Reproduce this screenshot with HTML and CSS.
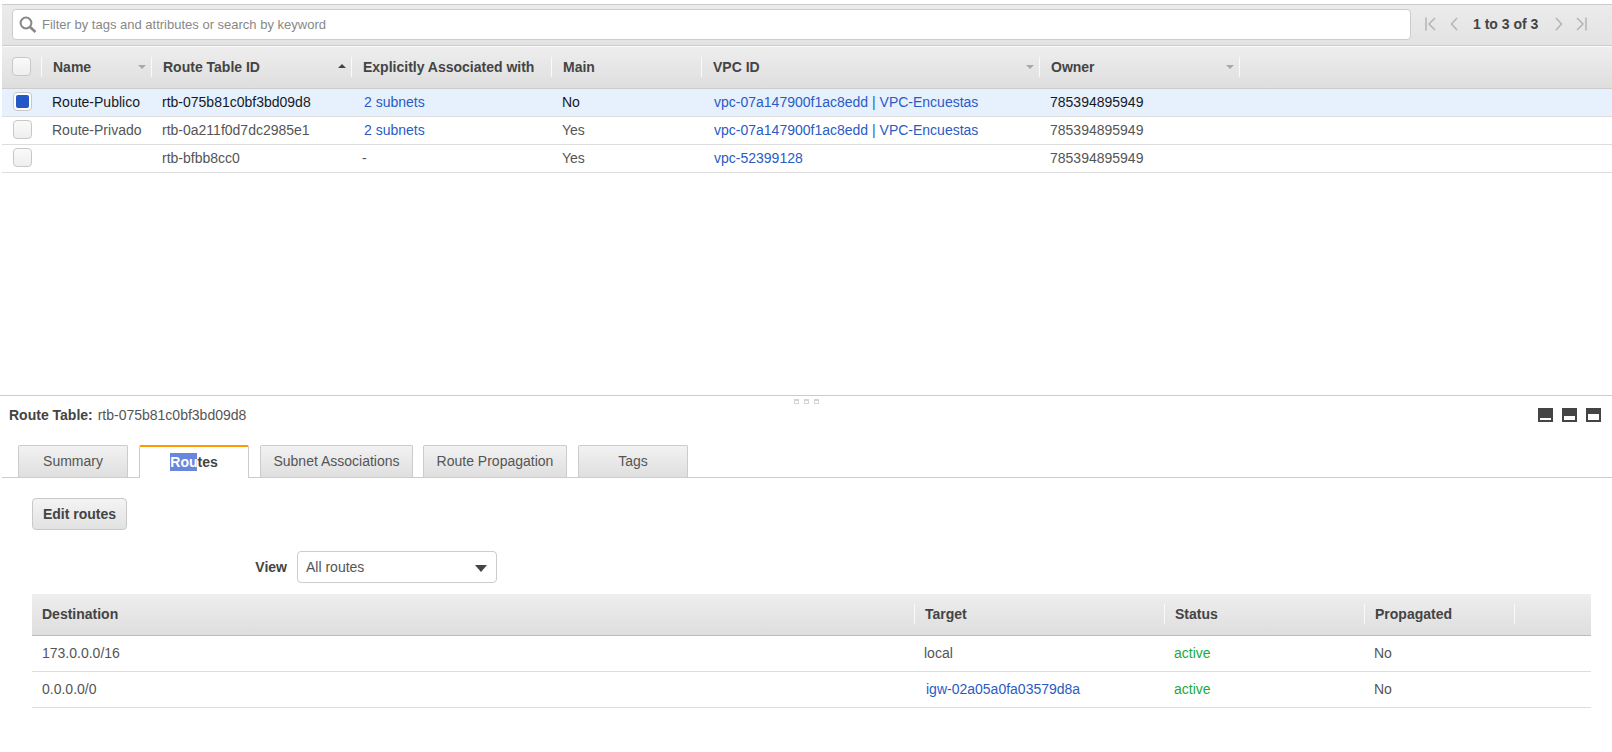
FILE: index.html
```html
<!DOCTYPE html>
<html lang="en">
<head>
  <meta charset="UTF-8">
  <title>Route Tables</title>
  <link rel="stylesheet" href="styles.css">
</head>
<body>
  <div class="top-pane">
    <div class="filter-bar">
      <div class="filter-input">
        <svg class="search-icon" width="18" height="17" viewBox="0 0 18 17">
          <circle cx="7" cy="7" r="5.4" fill="none" stroke="#888" stroke-width="2"/>
          <path d="M11 11l5.5 5" stroke="#888" stroke-width="2.6" fill="none"/>
        </svg>
        <span>Filter by tags and attributes or search by keyword</span>
      </div>
      <div class="pager">
        <svg width="11" height="14" viewBox="0 0 11 14"><path d="M1 0.5v13M10 1L4 7l6 6" fill="none" stroke="#b4b4b4" stroke-width="1.5"/></svg>
        <svg class="pager-prev" width="8" height="14" viewBox="0 0 8 14"><path d="M7 1L1.500 7L7 13" fill="none" stroke="#b4b4b4" stroke-width="1.500"/></svg>
        <span class="pager-text">1 to 3 of 3</span>
        <svg class="pager-next" width="8" height="14" viewBox="0 0 8 14"><path d="M1 1l5.500 6L1 13" fill="none" stroke="#b4b4b4" stroke-width="1.500"/></svg>
        <svg class="pager-last" width="11" height="14" viewBox="0 0 11 14"><path d="M10 0.5v13M1 1l6 6l-6 6" fill="none" stroke="#b4b4b4" stroke-width="1.500"/></svg>
      </div>
    </div>

    <div class="list-head">
      <div class="head-check"><span class="check"></span></div>
      <div class="head-cell">Name<i class="arrow"></i></div>
      <div class="head-cell">Route Table ID<i class="arrow arrow-up"></i></div>
      <div class="head-cell">Explicitly Associated with</div>
      <div class="head-cell">Main</div>
      <div class="head-cell">VPC ID<i class="arrow"></i></div>
      <div class="head-cell">Owner<i class="arrow"></i></div>
      <div class="head-cell"></div>
    </div>

    <div class="list-row selected">
      <div class="row-check"><span class="check checked"></span></div>
      <div>Route-Publico</div>
      <div>rtb-075b81c0bf3bd09d8</div>
      <div><a class="link" href="#">2 subnets</a></div>
      <div>No</div>
      <div><a class="link" href="#">vpc-07a147900f1ac8edd | VPC-Encuestas</a></div>
      <div>785394895949</div>
    </div>
    <div class="list-row">
      <div class="row-check"><span class="check"></span></div>
      <div>Route-Privado</div>
      <div>rtb-0a211f0d7dc2985e1</div>
      <div><a class="link" href="#">2 subnets</a></div>
      <div>Yes</div>
      <div><a class="link" href="#">vpc-07a147900f1ac8edd | VPC-Encuestas</a></div>
      <div>785394895949</div>
    </div>
    <div class="list-row">
      <div class="row-check"><span class="check"></span></div>
      <div></div>
      <div>rtb-bfbb8cc0</div>
      <div>-</div>
      <div>Yes</div>
      <div><a class="link" href="#">vpc-52399128</a></div>
      <div>785394895949</div>
    </div>
  </div>

  <div class="details">
    <div class="grip"><i></i><i></i><i></i></div>
    <div class="details-title">
      <div><b>Route Table:</b> <span class="title-id">rtb-075b81c0bf3bd09d8</span></div>
      <div class="pane-icons">
        <span class="pane-icon small"></span>
        <span class="pane-icon medium"></span>
        <span class="pane-icon large"></span>
      </div>
    </div>

    <div class="tabs">
      <div class="tab tab-summary">Summary</div>
      <div class="tab tab-routes active"><span class="picked">Rou</span>tes</div>
      <div class="tab tab-subnets">Subnet Associations</div>
      <div class="tab tab-propagation">Route Propagation</div>
      <div class="tab tab-tags">Tags</div>
    </div>

    <div class="tab-body">
      <button class="edit-btn">Edit routes</button>

      <div class="view-row">
        <label class="view-label">View</label>
        <div class="view-select">All routes<i class="select-arrow"></i></div>
      </div>

      <div class="routes-head">
        <div class="routes-hcell">Destination</div>
        <div class="routes-hcell sep">Target</div>
        <div class="routes-hcell sep">Status</div>
        <div class="routes-hcell sep">Propagated</div>
        <div class="routes-hcell sep"></div>
      </div>
      <div class="routes-row">
        <div>173.0.0.0/16</div>
        <div>local</div>
        <div class="active-text">active</div>
        <div>No</div>
      </div>
      <div class="routes-row">
        <div>0.0.0.0/0</div>
        <div><a class="link" href="#">igw-02a05a0fa03579d8a</a></div>
        <div class="active-text">active</div>
        <div>No</div>
      </div>
    </div>
  </div>
</body>
</html>
```

FILE: styles.css
```css
body {
  margin: 0;
  padding: 4px 0 0 2px;
  font-family: 'Liberation Sans', Arial, sans-serif;
  font-size: 14px;
  color: #555;
  background: #fff;
}

b {
  color: #444;
}

.top-pane {
  height: 391px;
}

.filter-bar {
  height: 38px;
  padding: 0 0 2px 10px;
  display: flex;
  align-items: center;
  background: linear-gradient(#ebebeb, #e3e3e3);
  border-top: 1px solid #ccc;
  border-bottom: 1px solid #ccc;
}

.filter-input {
  width: 1397px;
  height: 29px;
  display: flex;
  align-items: center;
  background: #fff;
  border: 1px solid #ccc;
  border-radius: 4px;
  font-size: 13px;
  color: #888;
}

.search-icon {
  margin: 0 5px 0 6px;
}

.pager {
  display: flex;
  align-items: center;
  margin-left: 14px;
}

.pager-prev {
  margin-left: 14px;
}

.pager-text {
  margin-left: 15px;
  font-weight: bold;
  color: #444;
}

.pager-next {
  margin-left: 17px;
}

.pager-last {
  margin-left: 13px;
}

.list-head {
  height: 43px;
  box-sizing: border-box;
  padding-bottom: 2px;
  display: grid;
  grid-template-columns: 40px 110px 200px 200px 150px 338px 200px 1fr;
  align-items: center;
  background: linear-gradient(#eeeeee, #dedede);
  border-top: 1px solid #fafafa;
  border-bottom: 1px solid #ccc;
  font-weight: bold;
  color: #444;
}

.head-check {
  padding-left: 10px;
  display: flex;
}

.head-cell {
  position: relative;
  height: 20px;
  line-height: 20px;
  margin-left: -1px;
  padding-left: 11px;
  border-left: 1px solid #fafafa;
}

.arrow {
  position: absolute;
  right: 6px;
  top: 8px;
  border-left: 4px solid transparent;
  border-right: 4px solid transparent;
  border-top: 4px solid #a8a8a8;
}

.arrow-up {
  top: 7px;
  border-top: 0;
  border-bottom: 4px solid #444;
}

.check {
  display: block;
  width: 19px;
  height: 19px;
  box-sizing: border-box;
  background: linear-gradient(#fafafa, #eeeeee);
  border: 1px solid #c8c8c8;
  border-radius: 4px;
}

.check.checked {
  background: #fff;
  padding: 2px;
}

.check.checked::before {
  content: "";
  display: block;
  width: 13px;
  height: 13px;
  background: #2458c6;
  border-radius: 2px;
}

.list-row {
  height: 28px;
  box-sizing: border-box;
  padding-bottom: 2px;
  display: grid;
  grid-template-columns: 40px 110px 200px 200px 150px 338px 200px 1fr;
  align-items: center;
  border-bottom: 1px solid #ddd;
}

.list-row > div {
  padding-left: 10px;
  white-space: nowrap;
}

.list-row > .row-check {
  padding-left: 11px;
}

.list-row.selected {
  background: #e6f1fd;
  color: #16191f;
}

.link {
  color: #2a5bc4;
  text-decoration: none;
  margin-left: 2px;
}

.details {
  position: relative;
  border-top: 1px solid #ccc;
  margin-left: -2px;
  padding-left: 2px;
}

.grip {
  position: absolute;
  left: 794px;
  top: 3px;
  display: flex;
  gap: 5px;
}

.grip i {
  width: 3px;
  height: 2px;
  border: 1px solid #d4d4d4;
  border-top-width: 2px;
}

.details-title {
  height: 38px;
  display: flex;
  align-items: center;
  justify-content: space-between;
  padding: 0 11px 0 7px;
}

.title-id {
  margin-left: 1px;
}

.pane-icons {
  display: flex;
  gap: 9px;
}

.pane-icon {
  position: relative;
  width: 15px;
  height: 14px;
  background: #444;
}

.pane-icon::after {
  content: "";
  position: absolute;
  left: 2px;
  right: 2px;
  bottom: 2px;
  background: #fff;
}

.pane-icon.small::after {
  height: 2px;
}

.pane-icon.medium::after {
  height: 4px;
}

.pane-icon.large::after {
  height: 6px;
}

.tabs {
  height: 32px;
  margin-top: 11px;
  display: flex;
  padding-left: 16px;
  gap: 11px;
  border-bottom: 1px solid #ccc;
}

.tab {
  height: 32px;
  box-sizing: border-box;
  line-height: 30px;
  text-align: center;
  background: linear-gradient(#f2f2f2, #dfdfdf);
  border: 1px solid #ccc;
  border-bottom: 0;
  border-radius: 2px 2px 0 0;
}

.tab-summary {
  width: 110px;
}

.tab-routes {
  width: 110px;
}

.tab-subnets {
  width: 153px;
}

.tab-propagation {
  width: 144px;
  margin-left: -1px;
}

.tab-tags {
  width: 110px;
}

.tab.active {
  height: 33px;
  background: #fff;
  border-top: 2px solid #f90;
  font-weight: bold;
  line-height: 31px;
  color: #444;
}

.picked {
  background: #6a86dc;
  color: #fff;
  padding: 1px 0;
}

.tab-body {
  padding: 20px 21px 0 30px;
}

.edit-btn {
  display: block;
  width: 95px;
  height: 32px;
  padding: 0;
  background: linear-gradient(#f4f4f4, #e2e2e2);
  border: 1px solid #c8c8c8;
  border-radius: 4px;
  font-family: inherit;
  font-size: 14px;
  font-weight: bold;
  color: #444;
}

.view-row {
  display: flex;
  align-items: center;
  margin-top: 21px;
}

.view-label {
  width: 255px;
  margin-right: 10px;
  text-align: right;
  font-weight: bold;
  color: #444;
}

.view-select {
  position: relative;
  width: 200px;
  height: 32px;
  box-sizing: border-box;
  line-height: 30px;
  padding-left: 8px;
  background: #fff;
  border: 1px solid #ccc;
  border-radius: 4px;
}

.select-arrow {
  position: absolute;
  right: 9px;
  top: 13px;
  border-left: 6px solid transparent;
  border-right: 6px solid transparent;
  border-top: 7px solid #444;
}

.routes-head {
  margin-top: 11px;
  height: 42px;
  box-sizing: border-box;
  padding-bottom: 2px;
  display: grid;
  grid-template-columns: 882px 250px 200px 150px 1fr;
  align-items: center;
  background: linear-gradient(#eeeeee, #dedede);
  border-bottom: 1px solid #bbb;
  font-weight: bold;
  color: #444;
}

.routes-hcell {
  height: 20px;
  line-height: 20px;
  padding-left: 10px;
}

.routes-hcell.sep {
  border-left: 1px solid #fafafa;
}

.routes-row {
  height: 36px;
  box-sizing: border-box;
  padding-bottom: 2px;
  display: grid;
  grid-template-columns: 882px 250px 200px 150px 1fr;
  align-items: center;
  border-bottom: 1px solid #ddd;
}

.routes-row > div {
  padding-left: 10px;
}

.active-text {
  color: #1aab3c;
}
```
